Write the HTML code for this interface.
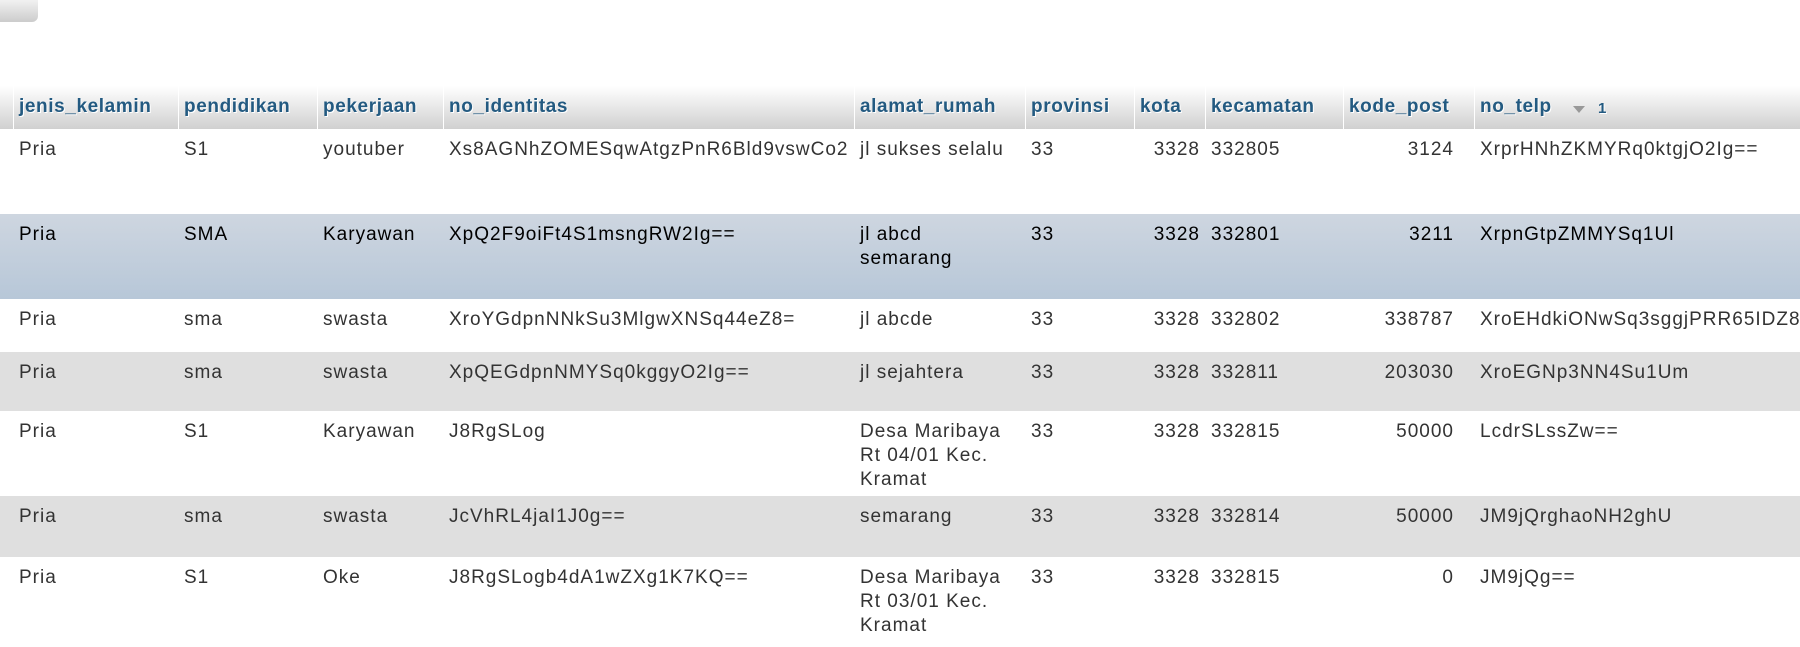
<!DOCTYPE html>
<html><head><meta charset="utf-8"><style>
html,body{margin:0;padding:0;width:1800px;height:618px;overflow:hidden;background:#fff;font-family:"Liberation Sans",Arial,sans-serif;}
.tab{position:absolute;left:-6px;top:-8px;width:44px;height:30px;border-radius:6px;background:linear-gradient(#fff,#ccc);}
.row{position:absolute;left:0;width:1800px;}
.c{position:absolute;top:0;white-space:nowrap;font-size:19px;letter-spacing:1px;line-height:24px;color:#333;}
.h{position:absolute;top:86px;height:43px;width:1800px;background:linear-gradient(#fff,#d0d0d0);}
.h .c{font-weight:bold;color:#235a81;top:9px;text-shadow:1px 1px 0 #fff;letter-spacing:0.6px;}
.b{position:absolute;top:0;height:43px;width:1px;background:#fff;}
.sel .c{color:#000;}
</style></head><body>
<div class="tab"></div>
<div class="h">
<div class="b" style="left:13px"></div><div class="b" style="left:178px"></div><div class="b" style="left:317px"></div><div class="b" style="left:443px"></div><div class="b" style="left:854px"></div><div class="b" style="left:1025px"></div><div class="b" style="left:1134px"></div><div class="b" style="left:1205px"></div><div class="b" style="left:1343px"></div><div class="b" style="left:1474px"></div>
<div class="c" style="left:19px">jenis_kelamin</div>
<div class="c" style="left:184px">pendidikan</div>
<div class="c" style="left:323px">pekerjaan</div>
<div class="c" style="left:449px">no_identitas</div>
<div class="c" style="left:860px">alamat_rumah</div>
<div class="c" style="left:1031px">provinsi</div>
<div class="c" style="left:1140px">kota</div>
<div class="c" style="left:1211px">kecamatan</div>
<div class="c" style="left:1349px">kode_post</div>
<div class="c" style="left:1480px">no_telp</div>
<div style="position:absolute;left:1573px;top:20px;width:0;height:0;border-left:6px solid transparent;border-right:6px solid transparent;border-top:7px solid #999;"></div>
<div class="c" style="left:1598px;font-size:15px;top:11px">1</div>
</div>

<div id="rows"></div>
<script>
var rows=[
[129,85,"#fff",["Pria","S1","youtuber","Xs8AGNhZOMESqwAtgzPnR6Bld9vswCo2","jl sukses selalu","33","3328","332805","3124","XrprHNhZKMYRq0ktgjO2Ig=="],0],
[214,85,"linear-gradient(#ced6e0,#b7c7d8)",["Pria","SMA","Karyawan","XpQ2F9oiFt4S1msngRW2Ig==","jl abcd<br>semarang","33","3328","332801","3211","XrpnGtpZMMYSq1Ul"],1],
[299,53,"#fff",["Pria","sma","swasta","XroYGdpnNNkSu3MlgwXNSq44eZ8=","jl abcde","33","3328","332802","338787","XroEHdkiONwSq3sggjPRR65IDZ8="],0],
[352,59,"#dfdfdf",["Pria","sma","swasta","XpQEGdpnNMYSq0kggyO2Ig==","jl sejahtera","33","3328","332811","203030","XroEGNp3NN4Su1Um"],0],
[411,85,"#fff",["Pria","S1","Karyawan","J8RgSLog","Desa Maribaya<br>Rt 04/01 Kec.<br>Kramat","33","3328","332815","50000","LcdrSLssZw=="],0],
[496,61,"#dfdfdf",["Pria","sma","swasta","JcVhRL4jaI1J0g==","semarang","33","3328","332814","50000","JM9jQrghaoNH2ghU"],0],
[557,90,"#fff",["Pria","S1","Oke","J8RgSLogb4dA1wZXg1K7KQ==","Desa Maribaya<br>Rt 03/01 Kec.<br>Kramat","33","3328","332815","0","JM9jQg=="],0]
];
var L=[19,184,323,449,860,1031,null,1211,null,1480];
var h="";
rows.forEach(function(r){
 h+='<div class="row'+(r[4]?' sel':'')+'" style="top:'+r[0]+'px;height:'+r[1]+'px;background:'+r[2]+'">';
 r[3].forEach(function(t,i){
  var st='top:9px;';
  if(i==6) st+='right:'+(1800-1200)+'px;text-align:right;';
  else if(i==8) st+='right:'+(1800-1454)+'px;text-align:right;';
  else st+='left:'+L[i]+'px;';
  h+='<div class="c" style="'+st+'">'+t+'</div>';
 });
 h+='</div>';
});
document.getElementById("rows").innerHTML=h;
</script>
</body></html>
